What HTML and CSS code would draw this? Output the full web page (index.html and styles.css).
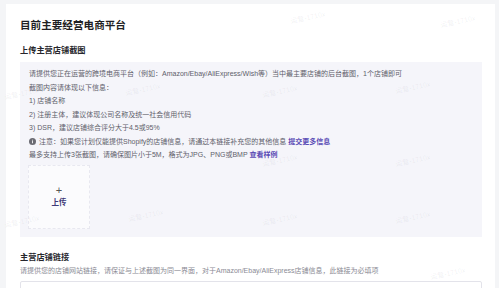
FILE: index.html
```html
<!DOCTYPE html>
<html lang="zh-CN">

<head>
	<meta charset="UTF-8">
	<title>目前主要经营电商平台</title>
	<link rel="stylesheet" href="styles.css">
</head>

<body>
	<div class="card">
		<h1 class="card-title">目前主要经营电商平台</h1>

		<h2 class="field-title">上传主营店铺截图</h2>
		<div class="tips">
			<p>请提供您正在运营的跨境电商平台（例如：Amazon/Ebay/AliExpress/Wish等）当中最主要店铺的后台截图，1个店铺即可</p>
			<p>截图内容请体现以下信息：</p>
			<p>1) 店铺名称</p>
			<p>2) 注册主体，建议体现公司名称及统一社会信用代码</p>
			<p>3) DSR，建议店铺综合评分大于4.5或95%</p>
			<p><svg class="info" viewBox="0 0 16 16"><circle cx="8" cy="8" r="8" fill="#6b6b73" /><rect x="7" y="7" width="2" height="5" fill="#fff" /><rect x="7" y="4" width="2" height="2" fill="#fff" /></svg>注意：如果您计划仅能提供Shopify的店铺信息，请通过本链接补充您的其他信息 <a class="link">提交更多信息</a></p>
			<p>最多支持上传3张截图，请确保图片小于5M，格式为JPG、PNG或BMP <a class="link">查看样例</a></p>
			<div class="upload">
				<span class="plus">+</span>
				<span class="upload-text">上传</span>
			</div>
		</div>

		<h2 class="field-title link-title">主营店铺链接</h2>
		<p class="help">请提供您的店铺网站链接，请保证与上述截图为同一界面，对于Amazon/Ebay/AliExpress店铺信息，此链接为必填项</p>
		<div class="input"></div>
	</div>

	<div class="watermarks">
		<span style="left:290px; top:12px">运营-1710x</span>
		<span style="left:440px; top:16px">运营-1710x</span>
		<span style="left:4px; top:88px">运营-1710x</span>
		<span style="left:125px; top:84px">运营-1710x</span>
		<span style="left:262px; top:86px">运营-1710x</span>
		<span style="left:395px; top:82px">运营-1710x</span>
		<span style="left:262px; top:155px">运营-1710x</span>
		<span style="left:395px; top:155px">运营-1710x</span>
		<span style="left:4px; top:216px">运营-1710x</span>
		<span style="left:128px; top:210px">运营-1710x</span>
		<span style="left:262px; top:214px">运营-1710x</span>
		<span style="left:395px; top:212px">运营-1710x</span>
		<span style="left:430px; top:268px">运营-1710x</span>
	</div>
</body>

</html>
```

FILE: styles.css
```css
html,
body {
	margin: 0;
	padding: 0;
}

body {
	background-color: #f4f5f7;
	font-family: "Liberation Sans", "Noto Sans CJK SC", sans-serif;
	color: #222;
	padding: 4px 4px 0 6px;
	height: 288px;
	box-sizing: border-box;
	overflow: hidden;
	position: relative;
}

.card {
	background-color: #fff;
	padding: 13px 13px 0 14px;
	height: 284px;
	box-sizing: border-box;
	overflow: hidden;
}

.card-title {
	margin: 0;
	font-size: 10.6px;
	font-weight: 700;
	line-height: 16px;
	color: #1f1f24;
}

.field-title {
	margin: 12px 0 0 0;
	font-size: 8.2px;
	font-weight: 700;
	line-height: 12px;
	color: #26262c;
}

.tips {
	margin-top: 5px;
	background-color: #f5f5fa;
	padding: 5px 9px 8px 9px;
}

.tips p {
	margin: 0;
	font-size: 7px;
	line-height: 13.5px;
	color: #60606a;
	white-space: nowrap;
}

.info {
	width: 7px;
	height: 7px;
	vertical-align: -1px;
	margin-right: 3px;
}

.link {
	color: #5a4bb5;
	font-weight: 700;
}

.upload {
	margin: 3px 0 0 -1px;
	width: 62px;
	height: 64px;
	box-sizing: border-box;
	background-color: #fbfbfd;
	border: 1px dashed #e8e8f0;
	display: flex;
	flex-direction: column;
	align-items: center;
	justify-content: center;
	gap: 1px;
}

.plus {
	font-size: 11px;
	line-height: 12px;
	font-weight: 300;
	color: #555;
}

.upload-text {
	font-size: 7.5px;
	line-height: 12px;
	font-weight: 700;
	color: #3e3a78;
}

.link-title {
	margin-top: 15px;
}

.help {
	margin: 1px 0 0 0;
	font-size: 7px;
	line-height: 11px;
	color: #8a8a94;
	white-space: nowrap;
}

.input {
	margin-top: 5px;
	height: 24px;
	border: 1px solid #e3e3ea;
	border-radius: 2px;
}

.watermarks span {
	position: absolute;
	font-size: 7px;
	color: rgba(120, 120, 140, 0.1);
	transform: rotate(-12deg);
	white-space: nowrap;
	pointer-events: none;
}
```
